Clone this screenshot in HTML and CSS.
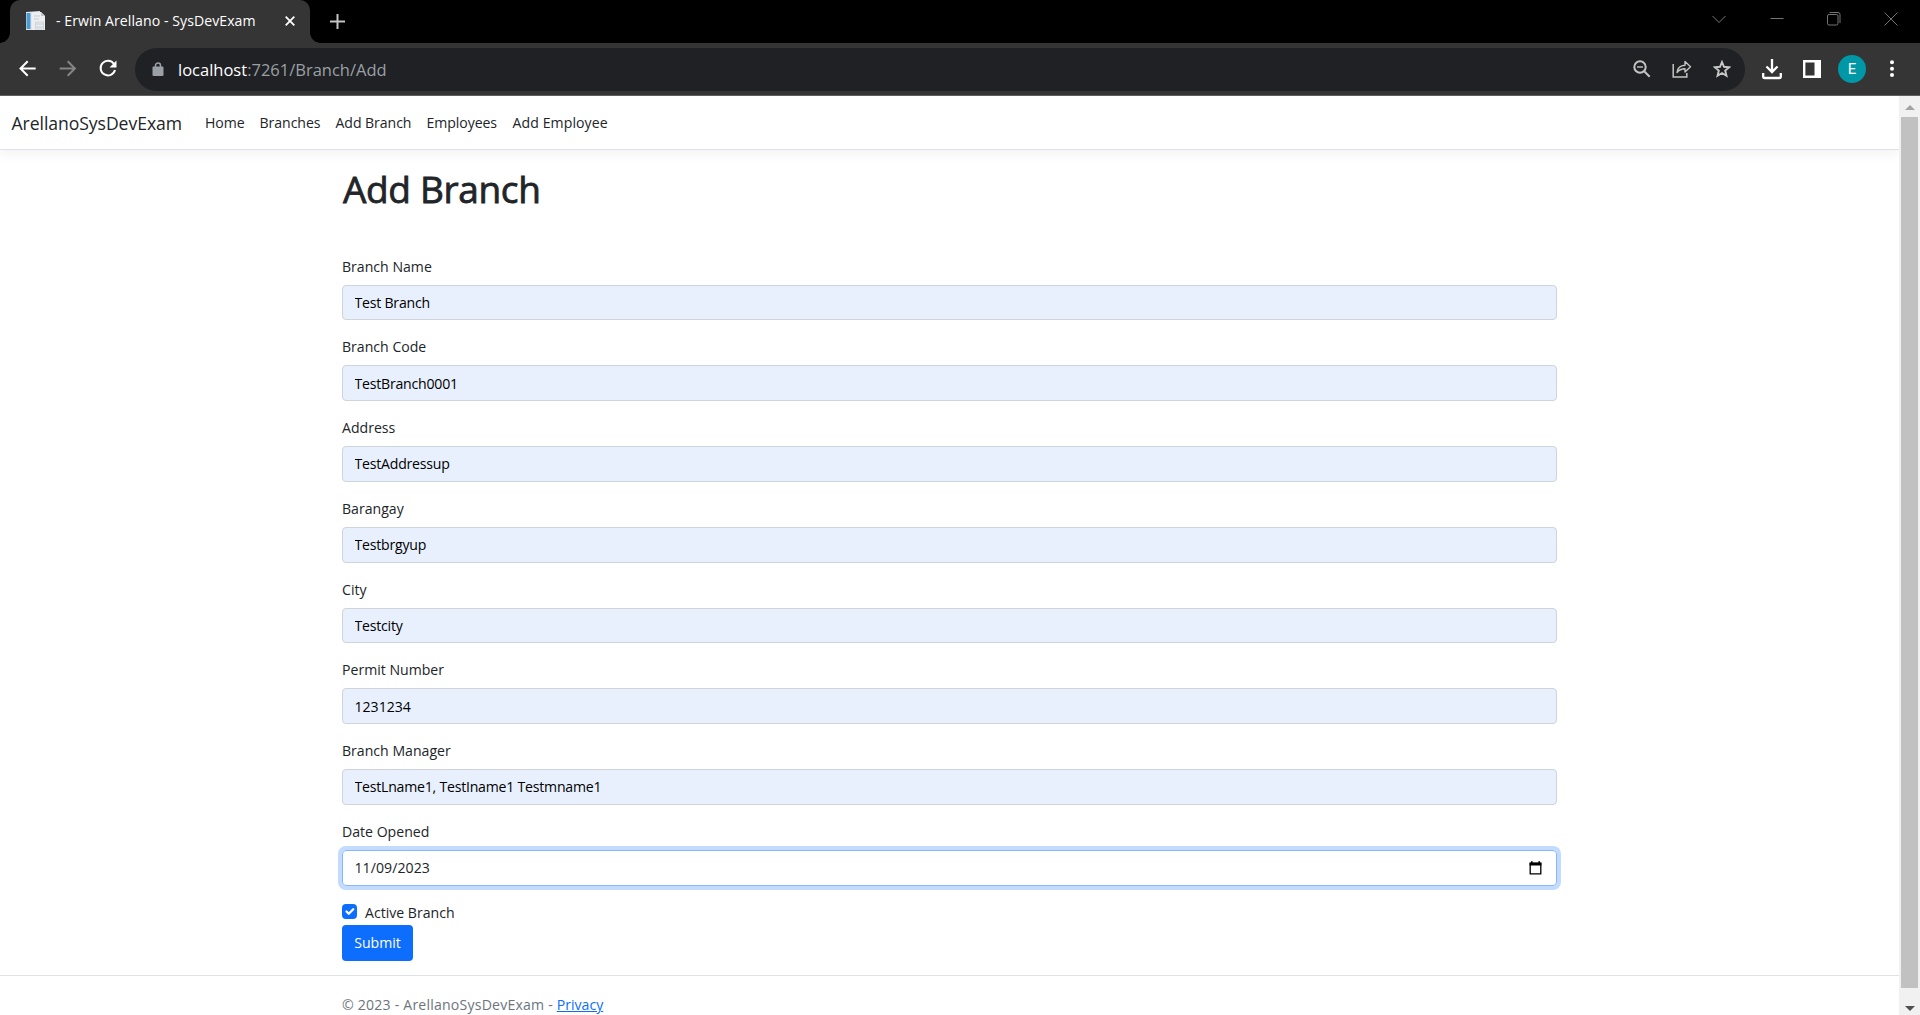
FILE: index.html
```html
<!DOCTYPE html>
<html lang="en">
<head>
<meta charset="utf-8">
<title>- Erwin Arellano - SysDevExam</title>
<link rel="stylesheet" href="styles.css">
</head>
<body>
<div class="tabstrip">
  <div class="tab">
    <svg class="favicon" width="20" height="20" viewBox="0 0 20 20"><path d="M1 1l14-1v19H1z" fill="#dfe5ea"/><path d="M1.500 2h4v16h-4z" fill="#4d9ad0"/><path d="M7 1h9l4 4v14H7z" fill="#eceef1"/><path d="M16 1v4h4z" fill="#c3c8cf"/><path d="M9 5h6M9 8h5M11 13h7M11 16h7" stroke="#c4cbd4" fill="none"/><path d="M10.500 11h8v7h-8z" fill="none" stroke="#d0d3d9"/></svg>
    <span class="tab-title">- Erwin Arellano - SysDevExam</span>
    <svg class="tab-close" width="10" height="10" viewBox="0 0 10 10"><path d="M.7.7l8.600 8.600M9.300.7L.7 9.300" stroke="#fff" stroke-width="1.800"/></svg>
  </div>
  <svg class="new-tab" width="15" height="15" viewBox="0 0 15 15"><path d="M7.500 0v15M0 7.500h15" stroke="#c4c4c4" stroke-width="2"/></svg>
  <div class="window-controls">
    <span><svg width="14" height="14" viewBox="0 0 14 14"><path d="M.5 4l6.500 6.500L13.500 4" class="thin"/></svg></span>
    <span><svg width="14" height="14" viewBox="0 0 14 14"><path d="M.5 6.500h13" class="thin"/></svg></span>
    <span><svg width="14" height="14" viewBox="0 0 14 14"><rect x=".5" y="2.500" width="10.500" height="10.500" rx="1.500" class="thin"/><path d="M2.500.5H11q2 0 2 2V11" class="thin"/></svg></span>
    <span><svg width="14" height="14" viewBox="0 0 14 14"><path d="M.5.5l13 13M13.500.5l-13 13" class="thin"/></svg></span>
  </div>
</div>
<div class="toolbar">
  <span class="tool"><svg width="18" height="18" viewBox="0 0 18 18"><path d="M16.700 8.500H2M8.700 1.300L1.500 8.500l7.200 7.200" class="line white"/></svg></span>
  <span class="tool"><svg width="18" height="18" viewBox="0 0 18 18"><path d="M.7 8.500h15M8.700 1.300l7.200 7.200-7.200 7.200" class="line dim"/></svg></span>
  <span class="tool"><svg width="20" height="20" viewBox="0 0 20 20"><path d="M16 5A7.300 7.300 0 1 0 17 11" class="line white"/><path d="M18.500 1.500v7h-7z" fill="#fff"/></svg></span>
  <div class="omnibox">
    <svg width="12" height="14" viewBox="0 0 12 14"><path d="M3.500 6V3.500a2.500 2.500 0 0 1 5 0V6" fill="none" stroke="#9aa0a6" stroke-width="1.500"/><rect x=".5" y="4.500" width="11" height="9.500" rx="1" fill="#9aa0a6"/></svg>
    <span class="url"><b>localhost</b>:7261/Branch/Add</span>
    <span class="tool"><svg width="18" height="18" viewBox="0 0 18 18"><circle cx="7" cy="7" r="5.700" class="line soft"/><path d="M11.200 11.200l5.500 5.500" class="line soft"/><path d="M4 7h6" stroke="#c4c4c4" stroke-width="1.400"/></svg></span>
    <span class="tool"><svg width="20" height="18" viewBox="0 0 20 18"><path d="M1.200 4v13.100h13.600V13" fill="none" stroke="#c4c4c4" stroke-width="1.500"/><path d="M5 12.500c.5-5 3-7 8-7.300V1.500l5.500 5.300L13 12V8.700c-4 0-6 1-8 3.800z" fill="none" stroke="#c4c4c4" stroke-width="1.400" stroke-linejoin="round"/></svg></span>
    <span class="tool"><svg width="18" height="18" viewBox="0 0 18 18"><path d="M9 2l2 4.800 5.200.4-4 3.400 1.250 5.100L9 13l-4.450 2.700L5.800 10.600l-4-3.400L7 6.800z" fill="none" stroke="#c8c8c8" stroke-width="1.900"/></svg></span>
  </div>
  <span class="tool"><svg width="20" height="21" viewBox="0 0 20 21"><path d="M10 0v12M4.500 7.500L10 13l5.500-5.500M1.200 14v3.500q0 1.500 1.500 1.500h14.600q1.500 0 1.500-1.500V14" fill="none" stroke="#fff" stroke-width="2.300"/></svg></span>
  <span class="tool"><svg width="18" height="18" viewBox="0 0 18 18"><path d="M1.200 1.200h15.600v15.600H1.200z" fill="none" stroke="#fff" stroke-width="2.400"/><path d="M11.500 1H17v16h-5.500z" fill="#fff"/></svg></span>
  <span class="tool"><span class="avatar">E</span></span>
  <span class="tool"><svg width="4" height="18" viewBox="0 0 4 18"><g fill="#fff"><circle cx="2" cy="2.300" r="2"/><circle cx="2" cy="8.700" r="2"/><circle cx="2" cy="15" r="2"/></g></svg></span>
</div>
<div class="viewport">
  <div class="page">
    <nav class="navbar">
      <a class="brand" href="#">ArellanoSysDevExam</a>
      <a href="#">Home</a><a href="#">Branches</a><a href="#">Add Branch</a><a href="#">Employees</a><a class="last" href="#">Add Employee</a>
    </nav>
    <main class="container">
      <h1>Add Branch</h1>
      <form>
        <label>Branch Name</label><input class="filled" value="Test Branch">
        <label>Branch Code</label><input class="filled" value="TestBranch0001">
        <label>Address</label><input class="filled" value="TestAddressup">
        <label>Barangay</label><input class="filled" value="Testbrgyup">
        <label>City</label><input class="filled" value="Testcity">
        <label>Permit Number</label><input class="filled numeric" value="1231234">
        <label>Branch Manager</label><input class="filled" value="TestLname1, TestIname1 Testmname1">
        <label>Date Opened</label>
        <div class="date-field"><span>11/09/2023</span><svg width="13" height="14" viewBox="0 0 13 14"><path d="M1.200 2.500h10.600v10.300H1.200z" fill="none" stroke="#000" stroke-width="1.300"/><path d="M.6 1.500h11.800v3H.6zM2 .2h1.600v2H2zM9.400.2H11v2H9.400z"/></svg></div>
        <div class="check"><span class="box"><svg width="15" height="15" viewBox="0 0 20 20"><path d="M6 10l3 3 6-6" fill="none" stroke="#fff" stroke-width="3" stroke-linecap="round" stroke-linejoin="round"/></svg></span><span class="check-text">Active Branch</span></div>
        <button type="button" class="submit">Submit</button>
      </form>
    </main>
    <footer><div class="container">© 2023 - ArellanoSysDevExam - <a href="#">Privacy</a></div></footer>
  </div>
  <div class="scrollbar"><i class="up"></i><i class="thumb"></i><i class="down"></i></div>
</div>
</body>
</html>
```
FILE: styles.css
```css
* { box-sizing: border-box; }
body {
  margin: 0;
  height: 1015px;
  display: flex;
  flex-direction: column;
  overflow: hidden;
  background: #fff;
  color: #212529;
  font: 14.1px/22.5px "Open Sans", sans-serif;
}
svg { display: block; flex: none; }
.tabstrip { height: 43px; background: #000; display: flex; align-items: flex-start; padding-left: 10px; flex: none; }
.tab {
  position: relative;
  width: 300px;
  height: 43px;
  background: #353535;
  border-radius: 10px 10px 0 0;
  display: flex;
  align-items: center;
  padding: 0 15px 1px;
  color: #fff;
}
.tab::before, .tab::after { content: ""; position: absolute; bottom: 0; width: 10px; height: 10px; }
.tab::before { left: -10px; background: radial-gradient(circle at 0 0, #000 9.5px, #353535 10px); }
.tab::after { right: -10px; background: radial-gradient(circle at 100% 0, #000 9.5px, #353535 10px); }
.tab-title { margin-left: 11px; flex: 1; white-space: nowrap; letter-spacing: .06px; }
.new-tab { margin: 14px 0 0 20px; }
.window-controls { margin-left: auto; display: flex; }
.window-controls span { width: 57.3px; height: 37px; display: grid; place-items: center; }
.thin { fill: none; stroke: #757575; stroke-width: 1; }
.toolbar { height: 53px; flex: none; background: #353535; border-bottom: 1px solid #5f5f5f; padding: 0 8px; display: flex; align-items: center; }
.tool { width: 40px; height: 43px; display: grid; place-items: center; flex: none; }
.line { fill: none; stroke-width: 2; }
.white { stroke: #fff; }
.dim { stroke: #858585; }
.soft { stroke: #c4c4c4; }
.omnibox { flex: 1; height: 43px; margin: 0 7px; border-radius: 22px; background: #202124; padding: 0 3px 0 17px; display: flex; align-items: center; }
.url { margin-left: 14px; flex: 1; padding-top: 2px; color: #9aa0a6; font-size: 16.5px; }
.url b { color: #fff; font-weight: 400; }
.avatar { width: 28px; height: 28px; border-radius: 50%; background: #0097a7; color: #fff; font: 15px/28px Roboto, sans-serif; text-align: center; }
.viewport { flex: 1; min-height: 0; display: flex; }
.page { flex: 1; overflow: hidden; }
.navbar { height: 54px; border-bottom: 1px solid #dee2e6; box-shadow: 0 4px 12px rgba(0,0,0,.05); display: flex; align-items: center; padding: 1px 0 0 11.5px; }
.navbar a { color: #212529; text-decoration: none; margin-right: 15px; letter-spacing: -.06px; }
.navbar .brand { font-size: 17.6px; margin-right: 23px; }
.navbar .last { margin-left: .5px; letter-spacing: .08px; }
.container { width: 1215px; margin: 0 auto; }
h1 { margin: 15px 0 0; padding: 1px 0 0 1px; height: 90.7px; font-size: 37px; line-height: 46px; font-weight: 400; letter-spacing: -.35px; -webkit-text-stroke: .8px #212529; }
label { display: block; height: 22.5px; margin-bottom: 6.5px; }
input, .date-field {
  display: flex;
  width: 100%;
  height: 35.71px;
  margin: 0 0 16px;
  padding: 0 11.5px;
  border: 1px solid #ced4da;
  border-radius: 4px;
  font: inherit;
  color: #000;
}
.filled { background: #e8f0fe; letter-spacing: -.22px; }
.numeric { letter-spacing: 0; }
.date-field { height: 36px; margin-bottom: 15.7px; align-items: center; justify-content: space-between; padding: 1px 14px 0 11.5px; border-color: #86b7fe; box-shadow: 0 0 0 4px rgba(13,110,253,.25); color: #212529; letter-spacing: .06px; }
.check { display: flex; height: 23.3px; padding-top: 2.6px; }
.box { width: 15px; height: 15px; border-radius: 4px; background: #0d6efd; }
.check-text { margin-left: 8px; line-height: 18px; }
.submit { display: block; width: 71px; height: 36px; border: 0; padding: 2px 0 0; border-radius: 4px; background: #0d6efd; color: #fff; font: inherit; text-align: center; }
footer { margin-top: 14px; border-top: 1px solid #dee2e6; line-height: 57px; color: #6c757d; letter-spacing: .2px; }
footer a { color: #0d6efd; letter-spacing: 0; }
.scrollbar { width: 21px; background: #f1f1f1; display: flex; flex-direction: column; align-items: center; padding: 9px 0 4px; }
.up, .down { border: 5px solid transparent; border-top: 0; border-bottom: 5px solid #a3a3a3; }
.down { border-bottom: 0; border-top: 5px solid #505050; }
.thumb { width: 17px; height: 871px; margin: 7px 0 18px; background: #c1c1c1; }
```
